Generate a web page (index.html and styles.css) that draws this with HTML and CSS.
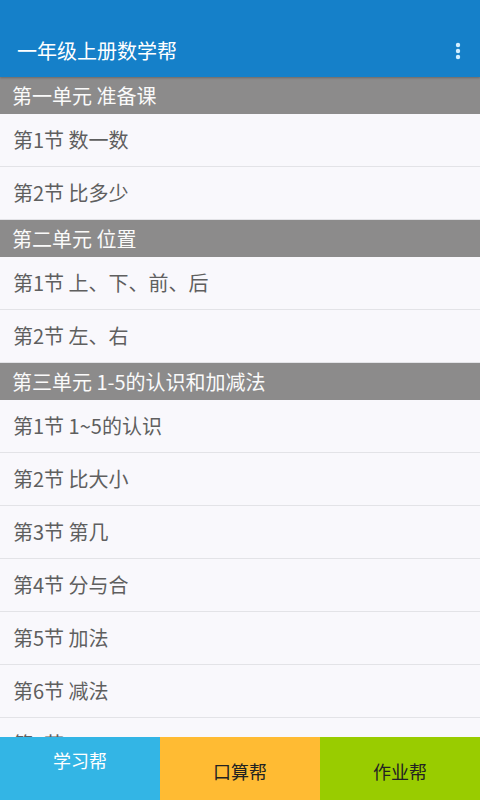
FILE: index.html
```html
<!DOCTYPE html>
<html lang="zh-CN">
<head>
<meta charset="utf-8">
<title>一年级上册数学帮</title>
<link rel="stylesheet" href="styles.css">
</head>
<body>
<div class="app">
  <header class="appbar">
    <div class="toolbar">
      <h1 class="title">一年级上册数学帮</h1>
      <svg class="menu" width="8" height="20" viewBox="0 0 8 20">
        <circle cx="4" cy="4" r="2.2" fill="#d4efff"/>
        <circle cx="4" cy="10" r="2.2" fill="#d4efff"/>
        <circle cx="4" cy="16" r="2.2" fill="#d4efff"/>
      </svg>
    </div>
  </header>
  <main class="list">
    <div class="section">第一单元 准备课</div>
    <div class="row">第1节 数一数</div>
    <div class="row">第2节 比多少</div>
    <div class="section">第二单元 位置</div>
    <div class="row">第1节 上、下、前、后</div>
    <div class="row">第2节 左、右</div>
    <div class="section">第三单元 1-5的认识和加减法</div>
    <div class="row">第1节 1~5的认识</div>
    <div class="row">第2节 比大小</div>
    <div class="row">第3节 第几</div>
    <div class="row">第4节 分与合</div>
    <div class="row">第5节 加法</div>
    <div class="row">第6节 减法</div>
    <div class="row">第7节 0</div>
    <div class="row">第8节 练习</div>
  </main>
  <nav class="tabs">
    <div class="tab tab-study">学习帮</div>
    <div class="tab tab-calc">口算帮</div>
    <div class="tab tab-work">作业帮</div>
  </nav>
</div>
</body>
</html>
```
FILE: styles.css
```css
* { box-sizing: border-box; }
html, body {
  margin: 0;
  padding: 0;
}
body {
  font-family: "Noto Sans CJK SC", "Noto Sans", sans-serif;
  background: #f9f8fc;
}
.app {
  width: 480px;
  height: 800px;
  display: flex;
  flex-direction: column;
  overflow: hidden;
}
.appbar {
  background: #1580c9;
  padding-top: 24px;
  height: 77px;
  flex: none;
  position: relative;
  z-index: 2;
  box-shadow: 0 1px 2px rgba(0,0,0,0.25);
}
.toolbar {
  height: 53px;
  display: flex;
  align-items: center;
  justify-content: space-between;
  padding: 0 18px 0 17px;
}
.title {
  margin: 0;
  font-size: 20px;
  font-weight: normal;
  color: #ffffff;
  line-height: 1;
}
.menu { display: block; }
.list {
  flex: 1;
  overflow: hidden;
  background: #f9f8fc;
}
.section {
  height: 37px;
  background: #8c8b8b;
  color: #fafafa;
  font-size: 20px;
  line-height: 37px;
  padding-left: 12px;
}
.row {
  height: 53px;
  line-height: 52px;
  font-size: 20px;
  color: #5f5f5f;
  padding-left: 13px;
  border-bottom: 1px solid #e3e3e7;
}
.section + .row { }
.tabs {
  flex: none;
  height: 63px;
  display: grid;
  grid-template-columns: 1fr 1fr 1fr;
}
.tab {
  font-size: 18px;
  display: flex;
  justify-content: center;
}
.tab-study {
  background: #33b5e5;
  color: #ffffff;
  align-items: flex-start;
  padding-top: 10px;
}
.tab-calc {
  background: #ffbb33;
  color: #222222;
  align-items: center;
  padding-top: 4px;
}
.tab-work {
  background: #99cc00;
  color: #222222;
  align-items: center;
  padding-top: 4px;
}
```
